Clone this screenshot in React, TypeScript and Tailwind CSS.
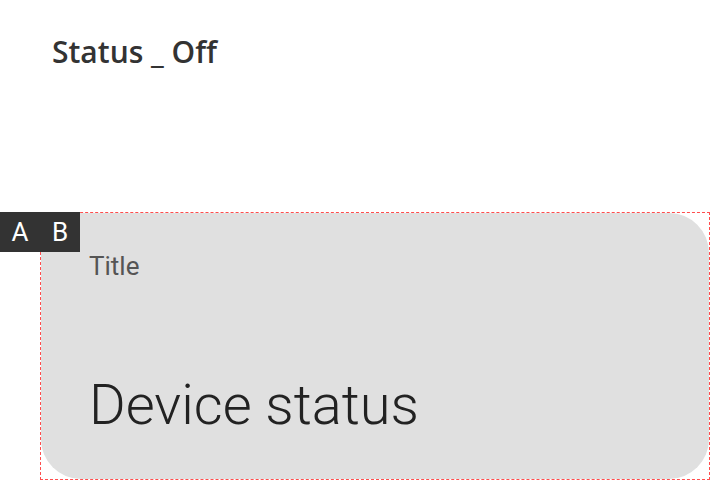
export default function App() {
  return (
    <div className="w-[712px] h-[480px] bg-white overflow-hidden relative">
      <div className="pl-[52px] pt-[32px]">
        <h1 className="text-[30px] leading-[40px] font-semibold text-[#333333] [font-family:'Open_Sans',sans-serif]">
          Status _ Off
        </h1>
      </div>
      <div className="relative mt-[140px]">
        <div className="absolute left-0 top-0 z-10 flex h-[40px] w-[80px] items-center bg-[#333333] text-white text-[26px] [font-family:Roboto,sans-serif]">
          <span className="w-[40px] text-center">A</span>
          <span className="w-[40px] text-center">B</span>
        </div>
        <div className="ml-[40px] w-[670px] h-[268px] border border-dashed border-[#ff4d4d]">
          <div className="h-full rounded-[40px] bg-[#e0e0e0] flex flex-col justify-between pl-[48px] pt-[38px] pb-[44px] [font-family:Roboto,sans-serif]">
            <div className="text-[26px] leading-[30px] text-[#555555]">Title</div>
            <div className="text-[56px] leading-[60px] font-light text-[#222222]">Device status</div>
          </div>
        </div>
      </div>
    </div>
  );
}
